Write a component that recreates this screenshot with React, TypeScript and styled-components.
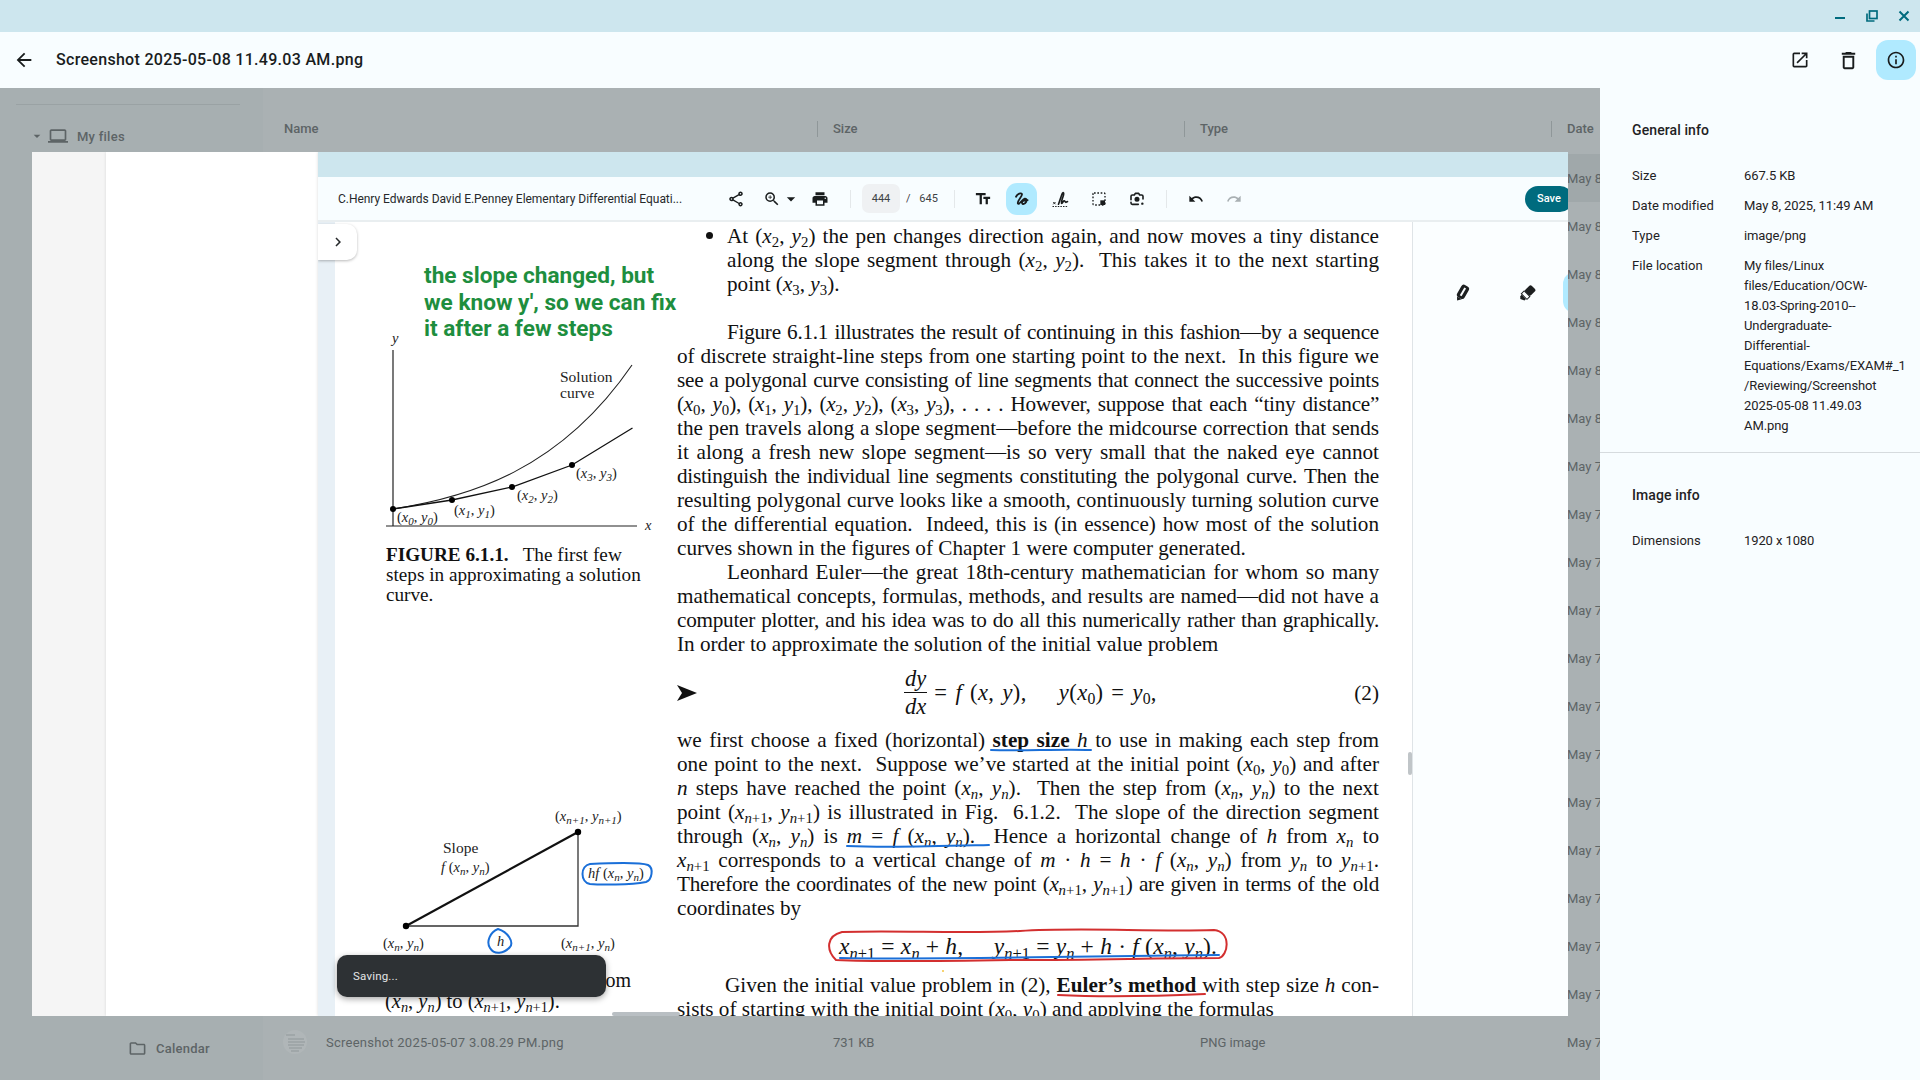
import React from "react";
import styled, { createGlobalStyle } from "styled-components";
import {
  MdArrowBack, MdArrowDropDown, MdChevronRight, MdLaptop, MdOpenInNew, MdOutlineDelete,
  MdOutlineFolder, MdOutlineInfo, MdOutlineShare, MdPrint, MdRedo, MdTextFields, MdUndo, MdZoomIn,
} from "react-icons/md";

const Global = createGlobalStyle`
  html, body { margin: 0; padding: 0; width: 1920px; height: 1080px; overflow: hidden; background: #f8fdff; }
  * { box-sizing: border-box; }
`;

const Screen = styled.div`
  width: 1920px; height: 1080px; display: flex; flex-direction: column;
  font-family: Roboto, "Liberation Sans", sans-serif; color: #191c1d; overflow: hidden;
`;
const TitleBar = styled.div`
  height: 32px; flex: none; background: #cde6ee; display: flex; justify-content: flex-end;
  align-items: center; color: #006b7e;
`;
const WinBtn = styled.div`
  width: 32px; height: 32px; display: flex; align-items: center; justify-content: center;
`;
const AppHeader = styled.header`
  height: 56px; flex: none; background: #f8fdff; display: flex; align-items: center; padding: 0 4px 0 13px;
`;
const IconBtn = styled.div<{ $active?: boolean; $size: number }>`
  width: 40px; height: 40px; border-radius: 12px; display: flex; align-items: center; justify-content: center;
  font-size: ${(p) => p.$size}px; margin-left: 8px; color: #191c1d;
  background: ${(p) => (p.$active ? "#b0eaff" : "transparent")};
`;
const BackIcon = styled.div`
  width: 24px; height: 24px; font-size: 22px; display: flex; align-items: center; margin-right: 19px;
`;
const AppTitle = styled.h1`
  margin: 0; font-size: 16px; font-weight: 500; letter-spacing: 0.3px; line-height: 24px; flex: 1;
`;
const Body = styled.div`
  flex: 1; display: flex; min-height: 0;
`;
const Backdrop = styled.div`
  width: 1600px; flex: none; position: relative; overflow: hidden; display: flex; background: #aab1b3; color: #5d6466;
`;
const Sidebar = styled.nav`
  width: 263px; flex: none; background: #a7afb1; display: flex; flex-direction: column; padding: 16px 23px 20px 16px;
`;
const SideRule = styled.div`
  height: 1px; background: #9aa2a4; margin-bottom: 19px;
`;
const SideRow = styled.div<{ $indent: number }>`
  display: flex; align-items: center; height: 24px; font-size: 13px; font-weight: 500; letter-spacing: .25px;
  padding-left: ${(p) => p.$indent}px; gap: 9px; svg { flex: none; }
`;
const Caret = styled(MdArrowDropDown)`
  margin-right: -6px; margin-left: -4px;
`;
const SideBottom = styled.div`
  margin-top: auto;
`;
const Table = styled.div`
  flex: 1; min-width: 0; overflow: hidden;
`;
const HeadRow = styled.div`
  display: grid; grid-template-columns: 554px 367px 367px 49px; height: 66px; padding-top: 28px;
`;
const HeadCell = styled.div<{ $first?: boolean }>`
  height: 16px; margin-top: 5px; line-height: 16px; font-size: 13px; font-weight: 500; white-space: nowrap;
  padding-left: ${(p) => (p.$first ? 21 : 15)}px;
  border-left: ${(p) => (p.$first ? "0" : "1px solid #8f9799")};
`;
const FileRow = styled.div<{ $selected?: boolean }>`
  display: grid; grid-template-columns: 554px 367px 367px 49px; height: 48px; align-items: center;
  font-size: 13px; white-space: nowrap; background: ${(p) => (p.$selected ? "#a0a8aa" : "transparent")};
`;
const NameCell = styled.div`
  display: flex; align-items: center; gap: 19px; padding-left: 20px; letter-spacing: .25px;
`;
const PlainCell = styled.div`
  padding-left: 16px;
`;
const Thumb = styled.svg`
  width: 24px; height: 30px; flex: none;
`;

const Window = styled.div`
  position: absolute; left: 32px; top: 64px; width: 1536px; height: 864px; display: flex; overflow: hidden;
`;
const Rail = styled.div`
  width: 74px; flex: none; background: #f5f5f5;
`;
const BlankPane = styled.div`
  width: 212px; flex: none; background: #fff; box-shadow: 0 0 3px rgba(0,0,0,.12);
`;
const PdfWindow = styled.div`
  flex: 1; min-width: 0; display: flex; flex-direction: column; background: #fff;
  box-shadow: 0 0 3px rgba(0,0,0,.15); position: relative;
`;
const PdfTitleBar = styled.div`
  height: 25px; flex: none; background: #cde6ee;
`;
const Toolbar = styled.div`
  height: 45px; flex: none; background: #f8fdff; border-bottom: 2px solid #e9eef0; display: flex; align-items: center;
  color: #191c1d; margin-right: -5px;
`;
const DocTitle = styled.div`
  width: 400px; flex: none; padding-left: 20px; font-size: 12px; letter-spacing: -0.04px; white-space: nowrap;
  color: #26292b;
`;
const Slot = styled.div<{ $w: number }>`
  width: ${(p) => p.$w}px; height: 32px; flex: none; display: flex; align-items: center; justify-content: center;
  font-size: 18px;
`;
const SmallSlot = styled(Slot)`
  font-size: 16px;
`;
const ZoomSlot = styled(Slot)`
  padding-right: 2px;
`;
const ActiveSlot = styled(Slot)`
  border-radius: 11px; background: #b0eaff; margin: 0 3.75px;
`;
const MutedSlot = styled(SmallSlot)`
  color: #a9b0b3;
`;
const ZoomCaret = styled(MdArrowDropDown)`
  margin-right: -10px; font-size: 20px;
`;
const ToolSep = styled.div<{ $l: number; $r: number }>`
  width: 1px; height: 18px; background: #e4e8ea; flex: none; margin: 0 ${(p) => p.$r}px 0 ${(p) => p.$l}px;
`;
const PageBox = styled.div`
  width: 38px; height: 29px; border-radius: 7px; background: #eff1f3; font-size: 11px; color: #3d4245;
  display: flex; align-items: center; justify-content: center; flex: none;
`;
const PageTotal = styled.div`
  font-size: 11px; color: #3d4245; padding-left: 6px; width: 41px; white-space: nowrap; flex: none; word-spacing: 6px;
`;
const SaveBtn = styled.div`
  margin-left: auto; width: 48px; height: 26px; border-radius: 13px; background: #006b7e; color: #fff;
  font-size: 11px; font-weight: 500; display: flex; align-items: center; justify-content: center; flex: none;
`;
const Viewer = styled.div`
  flex: 1; min-height: 0; display: flex; position: relative; overflow: hidden;
`;
const Gutter = styled.div`
  width: 17px; flex: none; background: #e8f0f6;
`;
const Toggle = styled.div`
  position: absolute; left: 0; top: 2px; width: 39px; height: 36px; background: #fff; border-radius: 0 10px 10px 0;
  box-shadow: 0 1px 3px rgba(0,0,0,.28); display: flex; align-items: center; justify-content: center; font-size: 18px;
  z-index: 3; color: #26292b;
`;
const Page = styled.div`
  width: 1077px; flex: none; position: relative; overflow: hidden; background: #fff; display: flex;
  font-family: "Liberation Serif", "Times New Roman", serif; color: #111;
`;
const Margin = styled.div`
  width: 342px; flex: none; padding: 103px 0 0 50px;
`;
const FigSvg = styled.svg`
  display: block; overflow: visible;
`;
const Caption = styled.p`
  margin: 10px 0 0; font-size: 19.2px; line-height: 20px; width: 255px; white-space: nowrap; padding-left: 1px;
`;
const FigTwo = styled(FigSvg)`
  margin-top: 195px;
`;
const CaptionTwo = styled.p`
  margin: 10px 0 0; line-height: 21px; font-size: 20px; white-space: nowrap; width: 246px;
`;
const CapLine = styled.span<{ $fit?: boolean }>`
  display: block; width: 246px; text-align-last: ${(p) => (p.$fit ? "justify" : "left")};
  font-size: ${(p) => (p.$fit ? 20 : 20.5)}px;
`;
const Main = styled.div`
  width: 702px; flex: none; padding-top: 2px;
`;
const Line = styled.div<{ $last?: boolean; $indent?: number; $tight?: boolean }>`
  height: 24px; line-height: 24px; font-size: 21.2px; white-space: nowrap;
  letter-spacing: ${(p) => (p.$tight ? "-0.25px" : "0")};
  padding-left: ${(p) => p.$indent ?? 0}px;
  text-align: ${(p) => (p.$last ? "left" : "justify")};
  text-align-last: ${(p) => (p.$last ? "left" : "justify")};
`;
const Bullet = styled.span`
  position: absolute; left: 371px; top: 10px; width: 7px; height: 7px; border-radius: 50%; background: #111;
`;
const Gap = styled.div<{ $h: number }>`
  height: ${(p) => p.$h}px;
`;
const Sub = styled.sub`
  font-size: 0.7em; vertical-align: -0.28em; line-height: 0; letter-spacing: 0;
`;
const Eq = styled.div`
  height: 72px; display: flex; align-items: center; font-size: 22.5px; position: relative; padding-top: 2px;
`;
const EqArrow = styled.svg`
  width: 20px; height: 16px; flex: none; margin-right: 207px;
`;
const Frac = styled.span`
  display: inline-flex; flex-direction: column; align-items: center; font-style: italic; line-height: 28px;
  margin-right: 7px; span:first-child { border-bottom: 1.5px solid #111; padding: 0 1px; line-height: 27px; }
`;
const EqBody = styled.div`
  flex: 1; letter-spacing: .4px; word-spacing: 2px; white-space: pre;
`;
const EqNum = styled.span`
  font-size: 21.2px;
`;
const BoxedEq = styled.div`
  height: 53px; display: flex; align-items: center; justify-content: center; font-size: 23.5px; white-space: pre;
  letter-spacing: .2px;
`;
const BoxedInner = styled.span`
  display: block;
`;
const Ink = styled.svg`
  position: absolute; left: 0; top: 0; pointer-events: none; z-index: 1;
`;
const Note = styled.div`
  position: absolute; left: 89px; top: 41px; font-family: Roboto, sans-serif; font-weight: 700; font-size: 22.6px;
  line-height: 26.5px; color: #1e8e3e; white-space: nowrap; z-index: 2;
`;
const ScrollY = styled.div`
  position: absolute; right: 0; top: 530px; width: 4px; height: 23px; background: #c0c5c8; border-radius: 2px;
`;
const ScrollX = styled.div`
  position: absolute; left: 277px; bottom: 0; width: 68px; height: 4px; background: #b9bfc3; border-radius: 2px;
  z-index: 0;
`;
const Toast = styled.div`
  position: absolute; left: 19px; bottom: 19px; width: 269px; height: 42px; border-radius: 10px; background: #2d3134;
  color: #e3e5e6; font-family: Roboto, sans-serif; font-size: 11.5px; display: flex; align-items: center;
  padding-left: 16px; box-shadow: 0 2px 6px rgba(0,0,0,.35); z-index: 4; letter-spacing: .2px;
`;
const PenPane = styled.div`
  flex: 1; min-width: 0; background: #fbfeff; border-left: 1px solid #dfe4e7; overflow: hidden;
`;
const PenRow = styled.div`
  display: flex; align-items: center; padding: 50px 0 0 40px; gap: 47px; svg { flex: none; }
`;
const PenTab = styled.div`
  width: 40px; height: 41px; border-radius: 12px; background: #b0eaff; flex: none; margin-left: -20px;
`;

const InfoPanel = styled.aside`
  flex: 1; background: #f8fdff; color: #1f2224;
`;
const InfoSection = styled.section<{ $rule?: boolean }>`
  padding: 32px 16px 6px 32px; border-bottom: ${(p) => (p.$rule ? "1px solid #d6dbde" : "0")};
`;
const InfoHead = styled.h2`
  margin: 0 0 26px; font-size: 14px; font-weight: 500; line-height: 20px; letter-spacing: .1px;
`;
const InfoRow = styled.div`
  display: grid; grid-template-columns: 112px 1fr; font-size: 13px; line-height: 20px; margin-bottom: 10px; letter-spacing: .05px;
`;
const InfoValue = styled.span`
  letter-spacing: -.1px;
`;

const V = ({ c, s }: { c: string; s: string }) => (
  <>
    <i>{c}</i>
    <Sub>{s === "n" ? <i>n</i> : s === "n+1" ? <><i>n</i>+1</> : s}</Sub>
  </>
);
const P = ({ a, b }: { a: string; b: string }) => (
  <>(<V c="x" s={a} />, <V c="y" s={b} />)</>
);

const LabelText = styled.text<{ $upright?: boolean }>`
  font-family: "Liberation Serif", serif; font-size: ${(p) => (p.$upright ? 15.5 : 14.5)}px; fill: #222;
  font-style: ${(p) => (p.$upright ? "normal" : "italic")};
`;
const LS = styled.tspan`
  font-size: 11px; baseline-shift: -3px;
`;
const Up = styled.tspan`
  font-style: normal;
`;
const SvgP = ({ x, y, a, b }: { x: number; y: number; a: string; b: string }) => (
  <LabelText x={x} y={y}>
    <Up>(</Up>x<LS>{a}</LS><Up>, </Up>y<LS>{b}</LS><Up>)</Up>
  </LabelText>
);

const Scribble = () => (
  <svg width="18" height="18" viewBox="0 0 24 24" fill="none" stroke="currentColor" strokeWidth="2.4" strokeLinecap="round" strokeLinejoin="round">
    <path d="M4 9c2-4 7-6 8-3.5S5 15 6.5 18c1.5 2.5 6-6 9-6.5 3-.5 3.5 2 2 4.5s-5 4-5.5 1 3-3 7.5-3.5" />
  </svg>
);
const Signature = () => (
  <svg width="18" height="18" viewBox="0 0 24 24" fill="none" stroke="currentColor">
    <path d="M3 16l3 3M6 16l-3 3" strokeWidth="1.3" />
    <path d="M10 19c2-5 4-13 5.5-15 1.5-1.5 2 1.5.5 5-1 3-2.5 6-2 8.5.5 1.5 2-2 3-3 1.5-1 2 2.5 3 2 1-.5 1-1 2-1" strokeWidth="2.2" strokeLinecap="round" />
    <path d="M2 22h20" strokeWidth="1.3" strokeDasharray="2 1.5" />
  </svg>
);
const SelectArea = () => (
  <svg width="16" height="16" viewBox="0 0 24 24" fill="none" stroke="currentColor">
    <rect x="3" y="3" width="18" height="18" rx="1.5" strokeWidth="2" strokeDasharray="2.5 2.5" />
    <rect x="14" y="14" width="7" height="7" fill="currentColor" stroke="none" />
  </svg>
);
const CameraIcon = () => (
  <svg width="16" height="16" viewBox="0 0 24 24" fill="none" stroke="currentColor" strokeWidth="2.4" strokeLinecap="round" strokeLinejoin="round">
    <path d="M3 13V8a2 2 0 0 1 2-2h3l1.5-2.5h5L16 6h3a2 2 0 0 1 2 2v4" />
    <path d="M3 17v1a2 2 0 0 0 2 2h9" />
    <circle cx="12" cy="12.5" r="2.6" fill="currentColor" />
    <circle cx="20" cy="19" r="1.8" fill="currentColor" stroke="none" />
  </svg>
);
const PenOne = () => (
  <svg width="18" height="18" viewBox="0 0 18 18">
    <g transform="rotate(30 9 9)">
      <rect x="5" y="0.5" width="8.5" height="14" rx="3" fill="#1d1f20" />
      <rect x="8.2" y="3" width="2" height="9" fill="#fbfeff" />
      <path d="M6.5 14.5h5.5l-3.5 3.5z" fill="#1d1f20" />
    </g>
  </svg>
);
const PenTwo = () => (
  <svg width="18" height="18" viewBox="0 0 18 18">
    <g transform="rotate(45 9 9)">
      <rect x="5.5" y="0.5" width="8" height="9" rx="2" fill="#1d1f20" />
      <rect x="5.5" y="9.5" width="8" height="4" fill="#fbfeff" stroke="#1d1f20" strokeWidth="1" />
      <path d="M6.5 14h6v2l-4 2-2-2z" fill="#1d1f20" />
    </g>
  </svg>
);

const rows = Array.from({ length: 19 }, (_, i) => (i < 6 ? "May 8" : "May 7"));

export default function App() {
  return (
    <Screen>
      <Global />
      <TitleBar>
        <WinBtn>
          <svg width="12" height="12" viewBox="0 0 12 12"><rect x="1" y="7" width="10" height="2" fill="currentColor" /></svg>
        </WinBtn>
        <WinBtn>
          <svg width="12" height="12" viewBox="0 0 12 12" fill="none" stroke="currentColor" strokeWidth="1.7">
            <path d="M1 3.5V11h7.5" /><rect x="3.5" y="1" width="7.5" height="7.5" />
          </svg>
        </WinBtn>
        <WinBtn>
          <svg width="12" height="12" viewBox="0 0 12 12" stroke="currentColor" strokeWidth="2"><path d="M1.5 1.5l9 9M10.5 1.5l-9 9" /></svg>
        </WinBtn>
      </TitleBar>
      <AppHeader>
        <BackIcon><MdArrowBack /></BackIcon>
        <AppTitle>Screenshot 2025-05-08 11.49.03 AM.png</AppTitle>
        <IconBtn $size={20}><MdOpenInNew /></IconBtn>
        <IconBtn $size={23}><MdOutlineDelete /></IconBtn>
        <IconBtn $size={20} $active><MdOutlineInfo /></IconBtn>
      </AppHeader>
      <Body>
        <Backdrop>
          <Sidebar>
            <SideRule />
            <SideRow $indent={17}>
              <Caret size={16} />
              <MdLaptop size={20} />
              <span>My files</span>
            </SideRow>
            <SideBottom>
              <SideRow $indent={112}>
                <MdOutlineFolder size={19} />
                <span>Calendar</span>
              </SideRow>
            </SideBottom>
          </Sidebar>
          <Table>
            <HeadRow>
              <HeadCell $first>Name</HeadCell>
              <HeadCell>Size</HeadCell>
              <HeadCell>Type</HeadCell>
              <HeadCell>Date</HeadCell>
            </HeadRow>
            {rows.map((d, i) => (
              <FileRow key={i} $selected={i === 0}>
                <NameCell>
                  {i === 18 && (
                    <>
                      <Thumb viewBox="0 0 24 30">
                        <circle cx="12" cy="15" r="12" fill="#b0b6b8" />
                        <path d="M3 8h9M5 12h16M5 15h17M5 18h16M6 21h13M8 24h8" stroke="#9aa2a4" strokeWidth="1.5" />
                      </Thumb>
                      <span>Screenshot 2025-05-07 3.08.29 PM.png</span>
                    </>
                  )}
                </NameCell>
                <PlainCell>{i === 18 ? "731 KB" : ""}</PlainCell>
                <PlainCell>{i === 18 ? "PNG image" : ""}</PlainCell>
                <PlainCell>{d}</PlainCell>
              </FileRow>
            ))}
          </Table>
          <Window>
            <Rail />
            <BlankPane />
            <PdfWindow>
              <PdfTitleBar />
              <Toolbar>
                <DocTitle>C.Henry Edwards David E.Penney Elementary Differential Equati...</DocTitle>
                <Slot $w={36}><MdOutlineShare /></Slot>
                <ZoomSlot $w={48}><MdZoomIn /><ZoomCaret /></ZoomSlot>
                <Slot $w={36}><MdPrint /></Slot>
                <ToolSep $l={12} $r={11} />
                <PageBox>444</PageBox>
                <PageTotal>/ 645</PageTotal>
                <ToolSep $l={13} $r={9} />
                <Slot $w={38.5}><MdTextFields /></Slot>
                <ActiveSlot $w={31}><Scribble /></ActiveSlot>
                <Slot $w={38.5}><Signature /></Slot>
                <Slot $w={38.5}><SelectArea /></Slot>
                <Slot $w={38.5}><CameraIcon /></Slot>
                <ToolSep $l={9} $r={10} />
                <SmallSlot $w={38.5}><MdUndo /></SmallSlot>
                <MutedSlot $w={38.5}><MdRedo /></MutedSlot>
                <SaveBtn>Save</SaveBtn>
              </Toolbar>
              <Viewer>
                <Gutter />
                <Toggle><MdChevronRight /></Toggle>
                <Page>
                  <Margin>
                    <FigSvg width="290" height="210" viewBox="385 325 290 210">
                      <path d="M393 350V526M386 526H637" stroke="#222" strokeWidth="1.2" fill="none" />
                      <path d="M393 509C470 497 560 470 632 365" stroke="#222" strokeWidth="1.1" fill="none" />
                      <path d="M393 509L452 500L512 487L572 465L632.5 428" stroke="#111" strokeWidth="1.3" fill="none" />
                      <circle cx="393" cy="509" r="3" /><circle cx="452" cy="500" r="3" />
                      <circle cx="512" cy="487" r="3" /><circle cx="572" cy="465" r="3" />
                      <LabelText x={392} y={343}>y</LabelText>
                      <LabelText x={645} y={530}>x</LabelText>
                      <LabelText $upright x={560} y={382}>Solution</LabelText>
                      <LabelText $upright x={560} y={398}>curve</LabelText>
                      <SvgP x={576} y={478} a="3" b="3" />
                      <SvgP x={517} y={500} a="2" b="2" />
                      <SvgP x={454} y={515} a="1" b="1" />
                      <SvgP x={397} y={522} a="0" b="0" />
                    </FigSvg>
                    <Caption>
                      <b>FIGURE 6.1.1.</b>&nbsp;&nbsp; The first few<br />
                      steps in approximating a solution<br />
                      curve.
                    </Caption>
                    <FigTwo width="290" height="160" viewBox="385 800 290 160">
                      <path d="M406 926L578 832" stroke="#111" strokeWidth="2.2" />
                      <path d="M406 926H578V832" stroke="#333" strokeWidth="1.3" fill="none" />
                      <circle cx="406" cy="926" r="3.2" /><circle cx="578" cy="832" r="3.2" />
                      <LabelText x={555} y={821}><Up>(</Up>x<LS>n+1</LS><Up>, </Up>y<LS>n+1</LS><Up>)</Up></LabelText>
                      <LabelText $upright x={443} y={853}>Slope</LabelText>
                      <LabelText x={441} y={872}>f <Up>(</Up>x<LS>n</LS><Up>, </Up>y<LS>n</LS><Up>)</Up></LabelText>
                      <LabelText x={588} y={878}>hf <Up>(</Up>x<LS>n</LS><Up>, </Up>y<LS>n</LS><Up>)</Up></LabelText>
                      <LabelText x={383} y={948}><Up>(</Up>x<LS>n</LS><Up>, </Up>y<LS>n</LS><Up>)</Up></LabelText>
                      <LabelText x={497} y={946}>h</LabelText>
                      <LabelText x={561} y={948}><Up>(</Up>x<LS>n+1</LS><Up>, </Up>y<LS>n</LS><Up>)</Up></LabelText>
                      <path d="M590 864C610 863 640 862 648 865C654 868 652 880 646 882C630 885 600 885 590 884C580 882 580 866 590 864Z" stroke="#1a6fd8" strokeWidth="2" fill="none" />
                      <path d="M498 929C490 932 486 942 490 948C494 955 504 954 510 947C514 942 508 932 498 929Z" stroke="#1a6fd8" strokeWidth="2" fill="none" />
                    </FigTwo>
                    <CaptionTwo>
                      <CapLine $fit>FIGURE 6.1.2. The step from</CapLine>
                      <CapLine>
                        (<V c="x" s="n" />, <V c="y" s="n" />) to (<V c="x" s="n+1" />, <V c="y" s="n+1" />).
                      </CapLine>
                    </CaptionTwo>
                  </Margin>
                  <Main>
                    <Bullet />
                    <Line $indent={50}>At <P a="2" b="2" /> the pen changes direction again, and now moves a tiny distance</Line>
                    <Line $indent={50}>along the slope segment through <P a="2" b="2" />.&nbsp; This takes it to the next starting</Line>
                    <Line $indent={50} $last>point <P a="3" b="3" />.</Line>
                    <Gap $h={24} />
                    <Line $indent={50} $tight>Figure 6.1.1 illustrates the result of continuing in this fashion—by a sequence</Line>
                    <Line>of discrete straight-line steps from one starting point to the next.&nbsp; In this figure we</Line>
                    <Line $tight>see a polygonal curve consisting of line segments that connect the successive points</Line>
                    <Line $tight><P a="0" b="0" />, <P a="1" b="1" />, <P a="2" b="2" />, <P a="3" b="3" />, . . . . However, suppose that each “tiny distance”</Line>
                    <Line>the pen travels along a slope segment—before the midcourse correction that sends</Line>
                    <Line>it along a fresh new slope segment—is so very small that the naked eye cannot</Line>
                    <Line $tight>distinguish the individual line segments constituting the polygonal curve. Then the</Line>
                    <Line>resulting polygonal curve looks like a smooth, continuously turning solution curve</Line>
                    <Line>of the differential equation.&nbsp; Indeed, this is (in essence) how most of the solution</Line>
                    <Line $last>curves shown in the figures of Chapter 1 were computer generated.</Line>
                    <Line $indent={50}>Leonhard Euler—the great 18th-century mathematician for whom so many</Line>
                    <Line>mathematical concepts, formulas, methods, and results are named—did not have a</Line>
                    <Line $tight>computer plotter, and his idea was to do all this numerically rather than graphically.</Line>
                    <Line $last>In order to approximate the solution of the initial value problem</Line>
                    <Eq>
                      <EqArrow viewBox="0 0 20 16"><path d="M0 0L20 8L0 16L5 8Z" fill="#111" /></EqArrow>
                      <Frac><span>dy</span><span>dx</span></Frac>
                      <EqBody>= <i>f</i> (<i>x</i>, <i>y</i>),    <i>y</i>(<V c="x" s="0" />) = <V c="y" s="0" />,</EqBody>
                      <EqNum>(2)</EqNum>
                    </Eq>
                    <Line>we first choose a fixed (horizontal) <b>step size</b> <i>h</i> to use in making each step from</Line>
                    <Line>one point to the next.&nbsp; Suppose we’ve started at the initial point <P a="0" b="0" /> and after</Line>
                    <Line><i>n</i> steps have reached the point <P a="n" b="n" />.&nbsp; Then the step from <P a="n" b="n" /> to the next</Line>
                    <Line>point <P a="n+1" b="n+1" /> is illustrated in Fig.&nbsp; 6.1.2.&nbsp; The slope of the direction segment</Line>
                    <Line>through <P a="n" b="n" /> is <i>m</i> = <i>f</i> (<V c="x" s="n" />, <V c="y" s="n" />).&nbsp; Hence a horizontal change of <i>h</i> from <V c="x" s="n" /> to</Line>
                    <Line><V c="x" s="n+1" /> corresponds to a vertical change of <i>m</i> · <i>h</i> = <i>h</i> · <i>f</i> (<V c="x" s="n" />, <V c="y" s="n" />) from <V c="y" s="n" /> to <V c="y" s="n+1" />.</Line>
                    <Line $tight>Therefore the coordinates of the new point <P a="n+1" b="n+1" /> are given in terms of the old</Line>
                    <Line $last>coordinates by</Line>
                    <BoxedEq>
                      <BoxedInner>
                        <V c="x" s="n+1" /> = <V c="x" s="n" /> + <i>h</i>,     <V c="y" s="n+1" /> = <V c="y" s="n" /> + <i>h</i> · <i>f</i> (<V c="x" s="n" />, <V c="y" s="n" />).
                      </BoxedInner>
                    </BoxedEq>
                    <Line $indent={48}>Given the initial value problem in (2), <b>Euler’s method</b> with step size <i>h</i> con-</Line>
                    <Line $last>sists of starting with the initial point <P a="0" b="0" /> and applying the formulas</Line>
                  </Main>
                  <Note>the slope changed, but<br />we know y', so we can fix<br />it after a few steps</Note>
                  <Ink width="1077" height="794" viewBox="335 222 1077 794" fill="none" strokeLinecap="round" strokeWidth="2">
                    <path d="M991 750C1020 751 1060 749 1091 750" stroke="#1a6fd8" />
                    <path d="M847 846C890 848 950 846 989 845" stroke="#1a6fd8" />
                    <path d="M840 958C920 960 1100 956 1219 955" stroke="#1a6fd8" />
                    <path d="M842 932C900 930 960 934 1020 931C1080 927 1150 932 1214 930C1232 932 1228 956 1219 958C1150 958 1100 960 1010 960C950 961 880 962 836 960C826 950 826 936 842 932Z" stroke="#d32f2f" />
                    <path d="M1058 995C1100 997 1160 996 1205 994" stroke="#d32f2f" />
                    <circle cx="943" cy="971" r="1" fill="#f5c542" stroke="none" />
                  </Ink>
                  <ScrollY />
                  <ScrollX />
                </Page>
                <PenPane>
                  <PenRow>
                    <PenOne />
                    <PenTwo />
                    <PenTab />
                  </PenRow>
                </PenPane>
                <Toast>Saving...</Toast>
              </Viewer>
            </PdfWindow>
          </Window>
        </Backdrop>
        <InfoPanel>
          <InfoSection $rule>
            <InfoHead>General info</InfoHead>
            <InfoRow><span>Size</span><InfoValue>667.5 KB</InfoValue></InfoRow>
            <InfoRow><span>Date modified</span><InfoValue>May 8, 2025, 11:49 AM</InfoValue></InfoRow>
            <InfoRow><span>Type</span><InfoValue>image/png</InfoValue></InfoRow>
            <InfoRow>
              <span>File location</span>
              <InfoValue>
                My files/Linux<br />files/Education/OCW-<br />18.03-Spring-2010--<br />Undergraduate-<br />Differential-<br />
                Equations/Exams/EXAM#_1<br />/Reviewing/Screenshot<br />2025-05-08 11.49.03<br />AM.png
              </InfoValue>
            </InfoRow>
          </InfoSection>
          <InfoSection>
            <InfoHead>Image info</InfoHead>
            <InfoRow><span>Dimensions</span><InfoValue>1920 x 1080</InfoValue></InfoRow>
          </InfoSection>
        </InfoPanel>
      </Body>
    </Screen>
  );
}
